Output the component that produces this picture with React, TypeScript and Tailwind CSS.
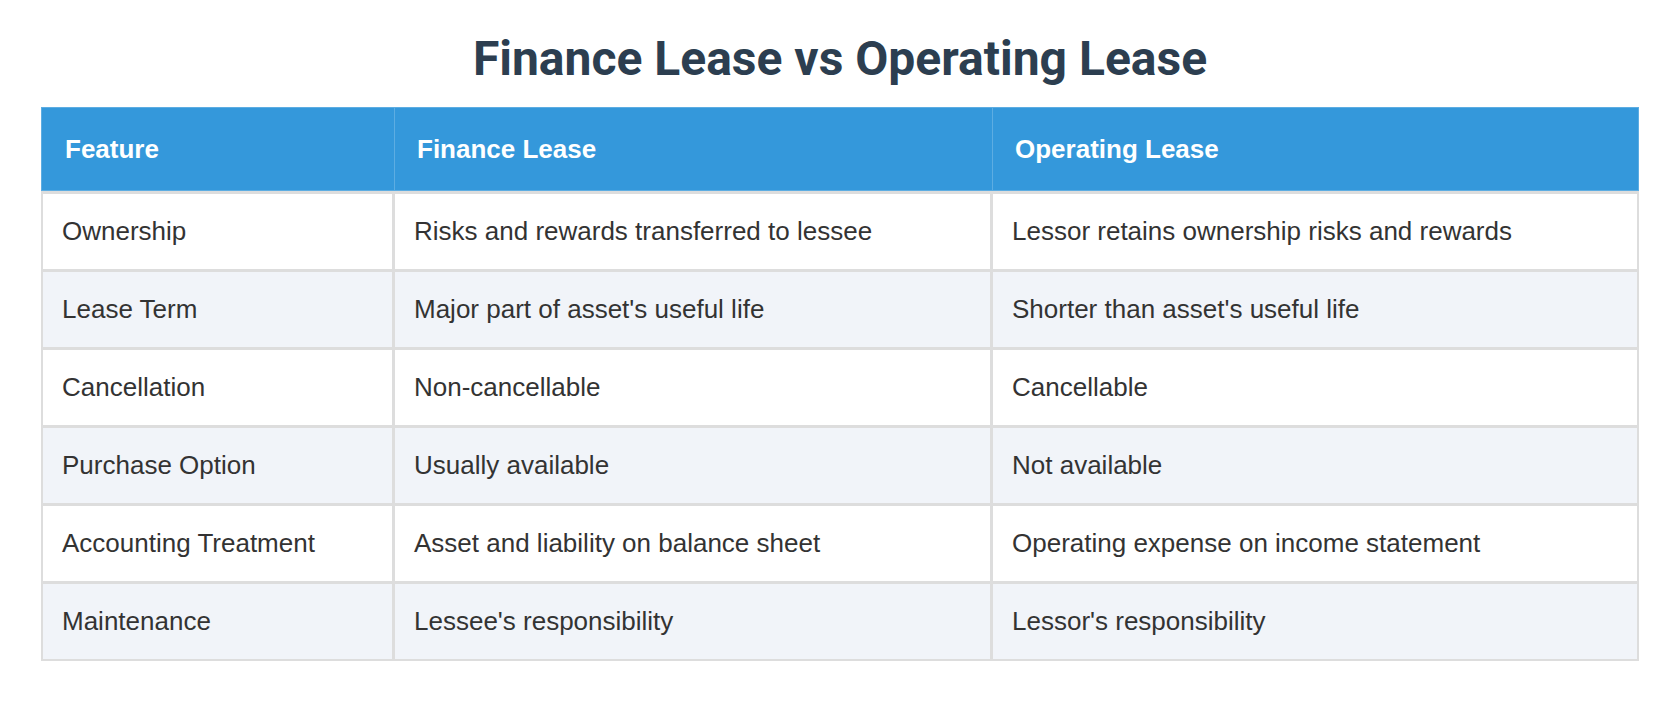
import React from 'react';

interface LeaseRow {
  feature: string;
  finance: string;
  operating: string;
}

const rows: LeaseRow[] = [
  { feature: 'Ownership', finance: 'Risks and rewards transferred to lessee', operating: 'Lessor retains ownership risks and rewards' },
  { feature: 'Lease Term', finance: "Major part of asset's useful life", operating: "Shorter than asset's useful life" },
  { feature: 'Cancellation', finance: 'Non-cancellable', operating: 'Cancellable' },
  { feature: 'Purchase Option', finance: 'Usually available', operating: 'Not available' },
  { feature: 'Accounting Treatment', finance: 'Asset and liability on balance sheet', operating: 'Operating expense on income statement' },
  { feature: 'Maintenance', finance: "Lessee's responsibility", operating: "Lessor's responsibility" },
];

const App: React.FC = () => {
  return (
    <div className="min-h-[704px] bg-white px-[41px] pt-[31px]">
      <h1 className="text-center text-[48px] font-bold leading-[56px] text-[#2c3e50] font-['Roboto',sans-serif]">
        Finance Lease vs Operating Lease
      </h1>

      <div className="mt-[20px] font-['Liberation_Sans',Arial,sans-serif] text-[26px]">
        {/* header */}
        <div className="grid grid-cols-[352px_598px_1fr] bg-[#3498db] text-white font-bold border border-[#5dade2]">
          <div className="h-[82px] flex items-center px-[23px]">Feature</div>
          <div className="h-[82px] flex items-center px-[22px] border-l border-[#5dade2]">Finance Lease</div>
          <div className="h-[82px] flex items-center px-[22px] border-l border-[#5dade2]">Operating Lease</div>
        </div>

        {/* body */}
        <div className="border-x-2 border-b-2 border-[#dddddd] text-[#333333]">
          {rows.map((row, i) => (
            <div
              key={row.feature}
              className={`grid grid-cols-[349px_598px_1fr] border-t-[3px] border-[#dddddd] ${i % 2 === 1 ? 'bg-[#f1f4f9]' : 'bg-white'}`}
            >
              <div className="h-[75px] flex items-center px-[19px]">{row.feature}</div>
              <div className="h-[75px] flex items-center px-[19px] border-l-[3px] border-[#dddddd]">{row.finance}</div>
              <div className="h-[75px] flex items-center px-[19px] border-l-[3px] border-[#dddddd]">{row.operating}</div>
            </div>
          ))}
        </div>
      </div>
    </div>
  );
};

export default App;
